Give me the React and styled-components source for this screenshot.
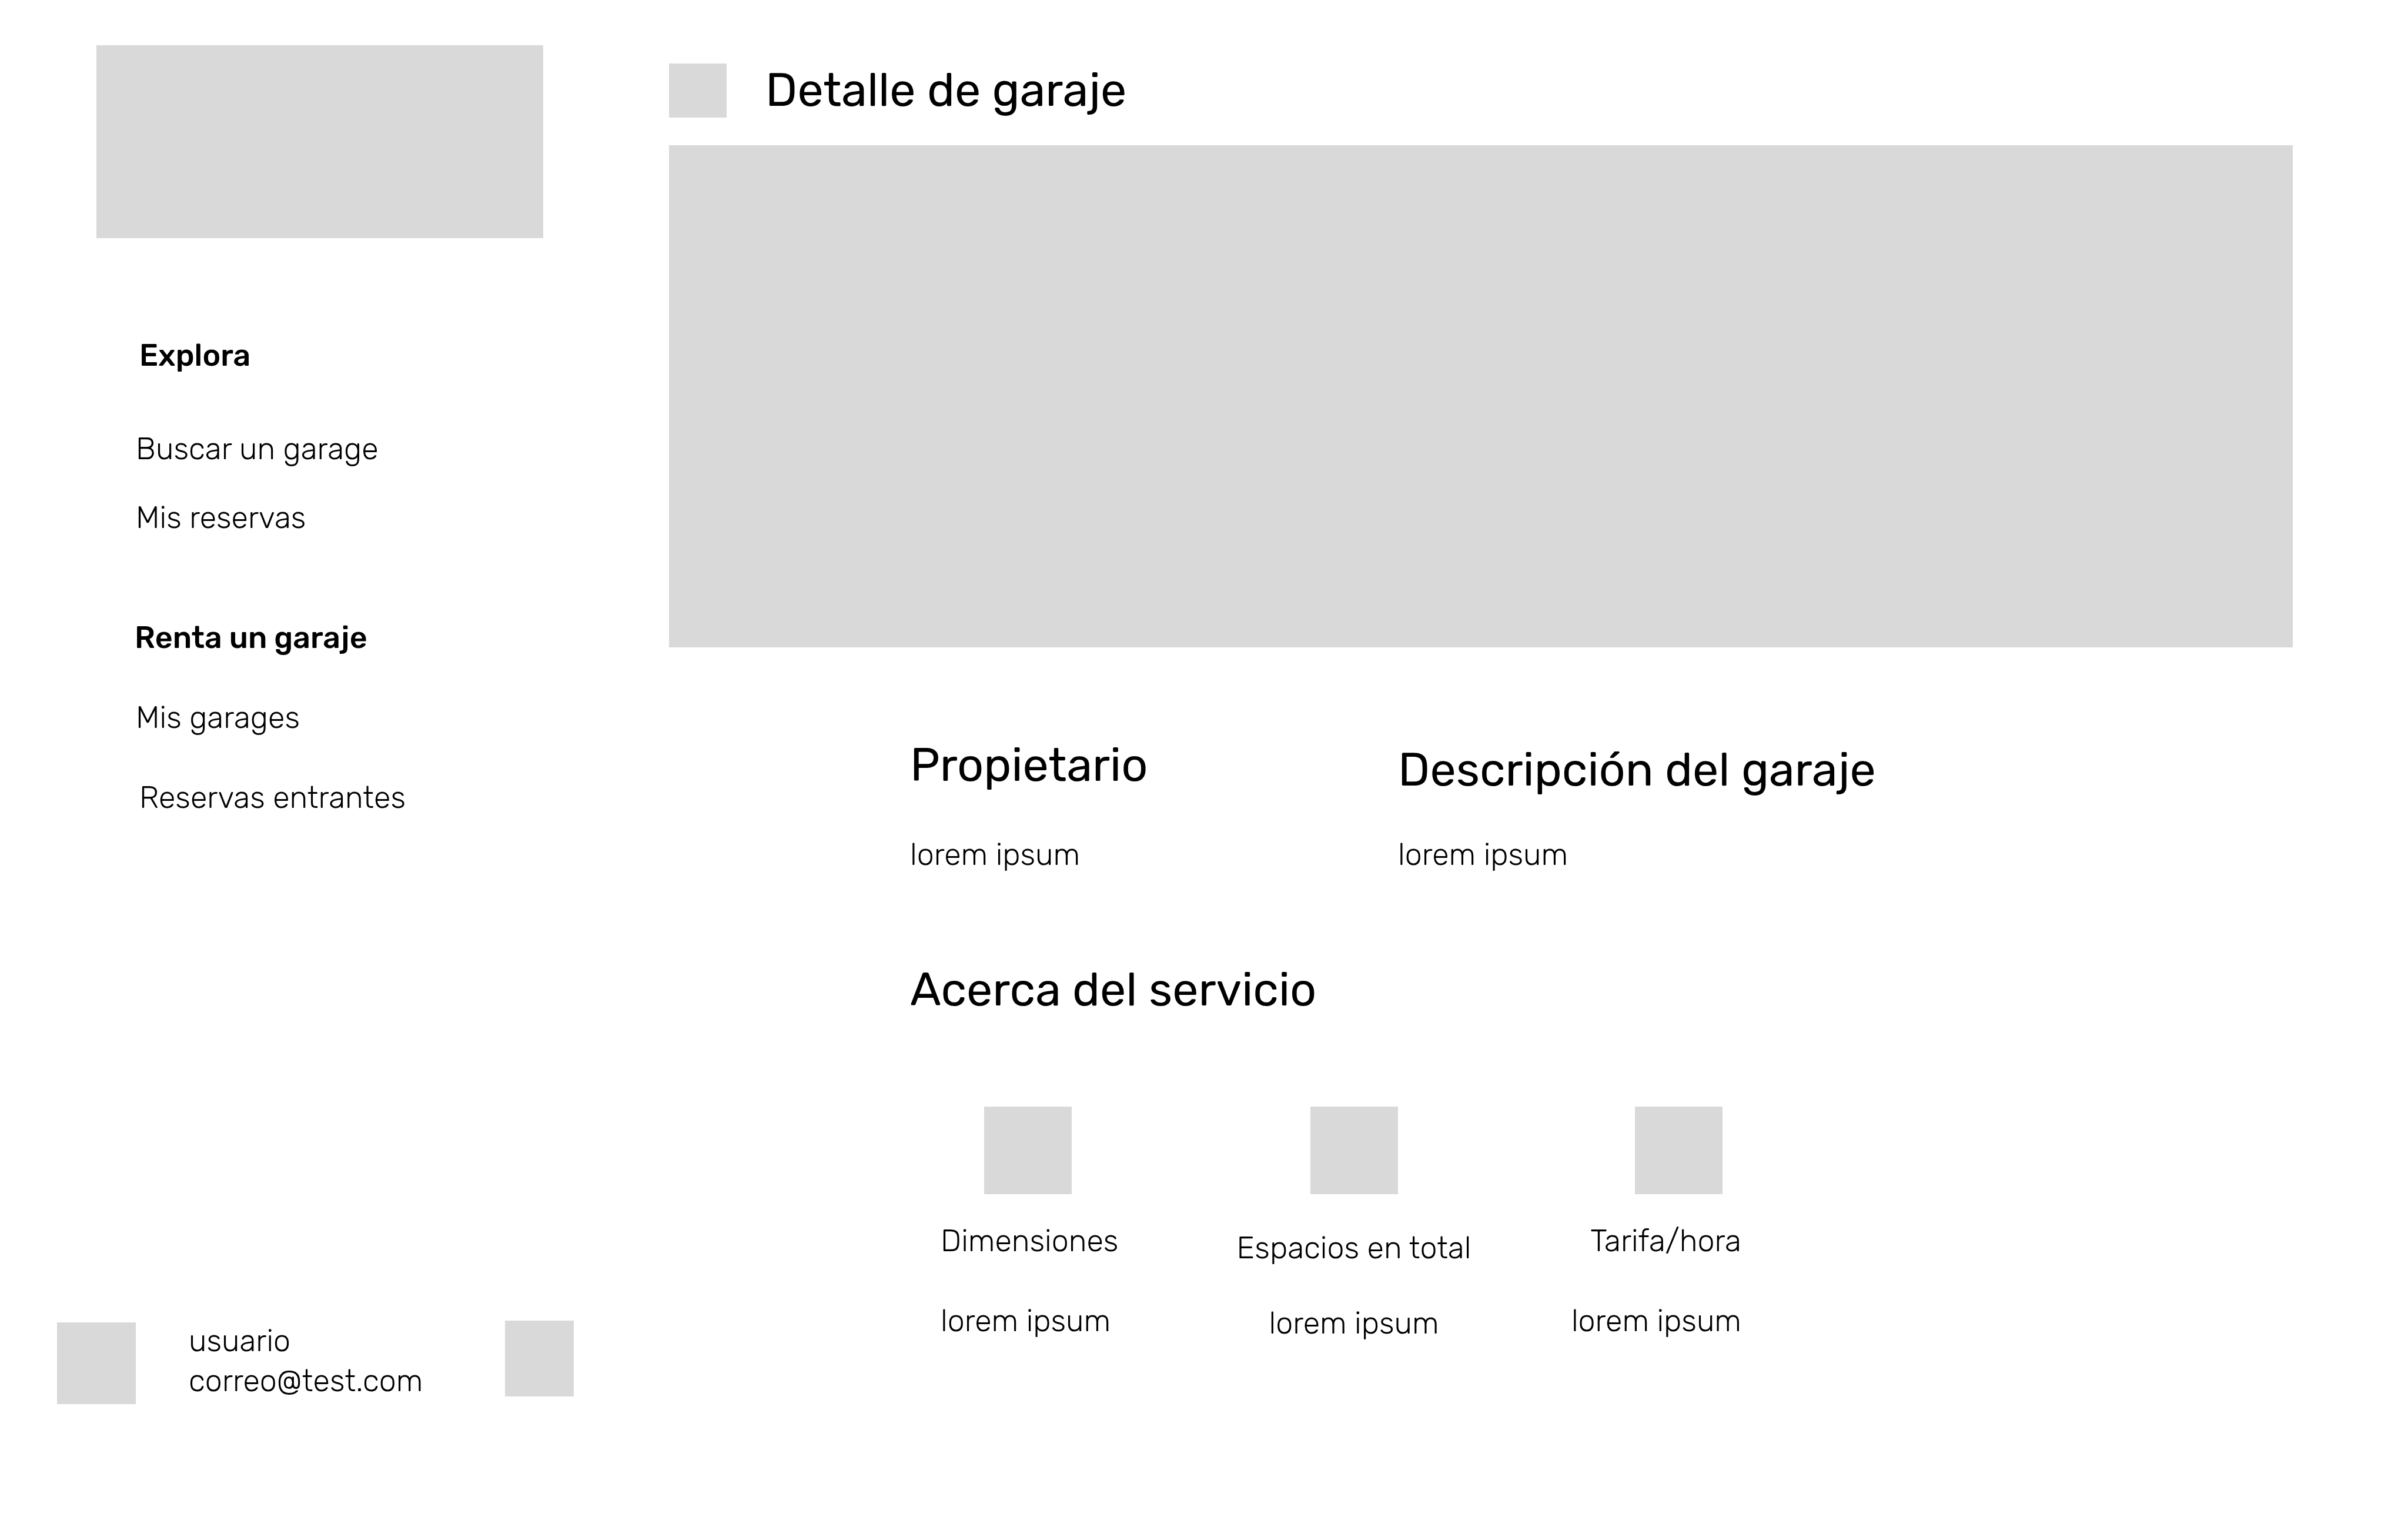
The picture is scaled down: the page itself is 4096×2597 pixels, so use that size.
import React from "react";
import styled, { createGlobalStyle } from "styled-components";

const GlobalStyle = createGlobalStyle`
  *, *::before, *::after {
    box-sizing: border-box;
  }

  body {
    margin: 0;
    background: #ffffff;
    color: #000000;
    font-family: Rubik, Roboto, sans-serif;
    font-size: 52px;
    font-weight: 300;
    line-height: 62px;
  }

  h1, h2, p, ul {
    margin: 0;
    padding: 0;
  }

  ul {
    list-style: none;
  }
`;

const Page = styled.div`
  display: flex;
  min-height: 100vh;
`;

const Sidebar = styled.aside`
  display: flex;
  flex-direction: column;
  flex: none;
  width: 1138px;
  padding: 77px 162px 209px 97px;
`;

const Logo = styled.div`
  width: 760px;
  height: 328px;
  margin-left: 67px;
  background: #d9d9d9;
`;

const Nav = styled.nav`
  display: flex;
  flex-direction: column;
  gap: 142px;
  margin-top: 168px;
  padding-left: 132px;
`;

const NavGroup = styled.section`
  display: flex;
  flex-direction: column;
  gap: ${({ $headingGap }) => $headingGap}px;
`;

const NavHeading = styled.h2`
  padding-left: ${({ $inset }) => ($inset ? 8 : 0)}px;
  font-size: 52px;
  font-weight: 500;
  line-height: 62px;
`;

const NavList = styled.ul`
  display: flex;
  flex-direction: column;
  gap: ${({ $gap }) => $gap}px;
`;

const NavItem = styled.li`
  padding-left: ${({ $inset }) => ($inset ? 8 : 2)}px;
`;

const NavLink = styled.a`
  display: block;
  color: inherit;
  text-decoration: none;
`;

const UserBar = styled.footer`
  display: flex;
  align-items: flex-start;
  min-height: 142px;
  margin-top: auto;
`;

const Avatar = styled.div`
  flex: none;
  align-self: flex-end;
  width: 134px;
  height: 139px;
  background: #d9d9d9;
`;

const UserText = styled.div`
  flex: 1;
  padding-left: 90px;
  line-height: 68px;
`;

const TileButton = styled.button`
  flex: none;
  width: ${({ $width }) => $width}px;
  height: ${({ $height }) => $height}px;
  padding: 0;
  border: 0;
  background: #d9d9d9;
  cursor: pointer;
`;

const Main = styled.main`
  flex: 1;
  min-width: 0;
  padding: 106px 196px 0 0;
`;

const Header = styled.header`
  display: flex;
  align-items: flex-end;
  gap: 66px;
`;

const Title = styled.h1`
  font-size: 79px;
  font-weight: 400;
  line-height: 94px;
`;

const Hero = styled.div`
  height: 854px;
  margin-top: 47px;
  background: #d9d9d9;
`;

const Content = styled.div`
  display: flex;
  flex-direction: column;
  gap: 152px;
  padding: 153px 0 0 410px;
`;

const Details = styled.div`
  display: grid;
  grid-template-columns: 830px 1fr;
  align-items: end;
`;

const Detail = styled.section`
  display: flex;
  flex-direction: column;
  gap: ${({ $gap }) => $gap}px;
`;

const SectionTitle = styled.h2`
  font-size: 79px;
  font-weight: 400;
  line-height: 94px;
`;

const Services = styled.ul`
  display: grid;
  grid-template-columns: 408px 590px 364px;
  padding-left: 52px;
`;

const Service = styled.li`
  display: flex;
  flex-direction: column;
  align-items: ${({ $align }) => $align};
`;

const ServiceTile = styled.div`
  width: 149px;
  height: 149px;
  margin: 0 ${({ $end }) => $end}px 0 ${({ $start }) => $start}px;
  background: #d9d9d9;
`;

const ServiceName = styled.p`
  margin-top: ${({ $gap }) => $gap}px;
`;

const ServiceValue = styled.p`
  margin-top: ${({ $gap }) => $gap}px;
`;

const navGroups = [
  {
    title: "Explora",
    inset: true,
    headingGap: 97,
    gap: 55,
    links: [{ label: "Buscar un garage" }, { label: "Mis reservas" }],
  },
  {
    title: "Renta un garaje",
    headingGap: 74,
    gap: 74,
    links: [
      { label: "Mis garages" },
      { label: "Reservas entrantes", inset: true },
    ],
  },
];

const details = [
  { title: "Propietario", text: "lorem ipsum", gap: 74 },
  { title: "Descripción del garaje", text: "lorem ipsum", gap: 66 },
];

const services = [
  { name: "Dimensiones", value: "lorem ipsum", align: "flex-start", start: 74, end: 0, nameGap: 48, valueGap: 74 },
  { name: "Espacios en total", value: "lorem ipsum", align: "center", start: 0, end: 0, nameGap: 60, valueGap: 66 },
  { name: "Tarifa/hora", value: "lorem ipsum", align: "flex-end", start: 0, end: 32, nameGap: 48, valueGap: 74 },
];

export default function App() {
  return (
    <>
      <GlobalStyle />
      <Page>
        <Sidebar>
          <Logo />
          <Nav>
            {navGroups.map((group) => (
              <NavGroup key={group.title} $headingGap={group.headingGap}>
                <NavHeading $inset={group.inset}>{group.title}</NavHeading>
                <NavList $gap={group.gap}>
                  {group.links.map((link) => (
                    <NavItem key={link.label} $inset={link.inset}>
                      <NavLink href="#">{link.label}</NavLink>
                    </NavItem>
                  ))}
                </NavList>
              </NavGroup>
            ))}
          </Nav>
          <UserBar>
            <Avatar />
            <UserText>
              <p>usuario</p>
              <p>correo@test.com</p>
            </UserText>
            <TileButton type="button" aria-label="Opciones" $width={117} $height={129} />
          </UserBar>
        </Sidebar>
        <Main>
          <Header>
            <TileButton type="button" aria-label="Volver" $width={98} $height={92} />
            <Title>Detalle de garaje</Title>
          </Header>
          <Hero />
          <Content>
            <Details>
              {details.map((detail) => (
                <Detail key={detail.title} $gap={detail.gap}>
                  <SectionTitle>{detail.title}</SectionTitle>
                  <p>{detail.text}</p>
                </Detail>
              ))}
            </Details>
            <SectionTitle>Acerca del servicio</SectionTitle>
            <Services>
              {services.map((service) => (
                <Service key={service.name} $align={service.align}>
                  <ServiceTile $start={service.start} $end={service.end} />
                  <ServiceName $gap={service.nameGap}>{service.name}</ServiceName>
                  <ServiceValue $gap={service.valueGap}>{service.value}</ServiceValue>
                </Service>
              ))}
            </Services>
          </Content>
        </Main>
      </Page>
    </>
  );
}
